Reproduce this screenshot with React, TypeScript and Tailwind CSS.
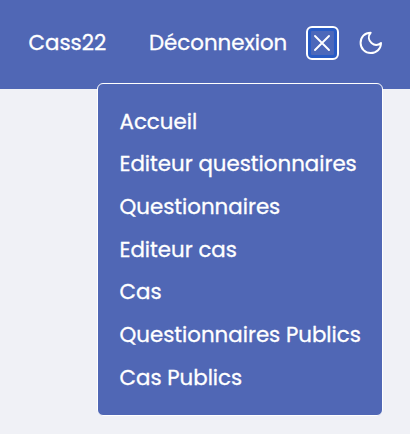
const items = [
  'Accueil',
  'Editeur questionnaires',
  'Questionnaires',
  'Editeur cas',
  'Cas',
  'Questionnaires Publics',
  'Cas Publics',
];

export default function App() {
  return (
    <div className="relative h-[434px] w-[410px] overflow-hidden bg-[#f0f1f6] font-['Poppins','Inter',sans-serif] text-[21.33px] leading-8 text-white [-webkit-text-stroke:0.3px_white]">
      <header className="flex h-[89px] items-start bg-[#5067b5] pt-[27px] pl-[28.5px]">
        <a className="w-[78px] whitespace-nowrap">Cass22</a>
        <a className="ml-[42.5px] w-[140px] whitespace-nowrap">Déconnexion</a>
        <button aria-label="Fermer" className="-mt-px ml-[16.5px] flex h-[34px] w-[33px] items-center justify-center rounded-[6px] border-2 border-white bg-[#4c68ba] shadow-[inset_0_0_0_3px_#285bc5]">
          <svg width="18" height="18" viewBox="0 0 18 18" fill="none" stroke="white" strokeWidth="1.9" strokeLinecap="round"><path d="M2 2l14 14M16 2L2 16" /></svg>
        </button>
        <svg className="mt-1 ml-5" width="24" height="24" viewBox="0 0 24 24" fill="none" stroke="white" strokeWidth="2" strokeLinejoin="round"><path d="M11.7 1.7C5.5 1.7 1.6 6.2 1.6 12A10.1 10.1 0 0 0 11.7 22.1C17.5 22.1 22 17.9 22 11.9C19.2 14.3 15.4 14.5 12.5 12C9.5 9.4 8.8 5.3 11.7 1.7Z" /></svg>
      </header>
      <nav className="absolute top-[83px] left-[97px] flex h-[333px] w-[286px] flex-col rounded-[6px] border border-white bg-[#5067b5] pt-[21.5px] pl-[21.5px]">
        {items.map((text) => (
          <a key={text} className="h-[42.7px] whitespace-nowrap">{text}</a>
        ))}
      </nav>
    </div>
  );
}
